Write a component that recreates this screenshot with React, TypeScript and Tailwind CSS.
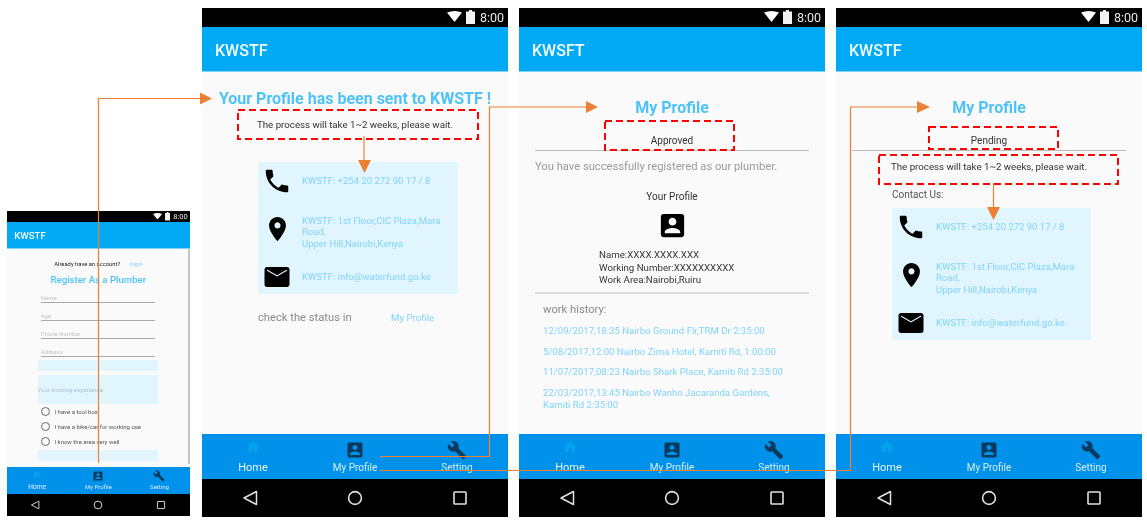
import React from "react";

const P = {
  call: "M6.62 10.79c1.44 2.83 3.76 5.14 6.59 6.59l2.2-2.2c.27-.27.67-.36 1.02-.24 1.12.37 2.33.57 3.57.57.55 0 1 .45 1 1V20c0 .55-.45 1-1 1-9.39 0-17-7.61-17-17 0-.55.45-1 1-1h3.5c.55 0 1 .45 1 1 0 1.25.2 2.45.57 3.57.11.35.03.74-.25 1.02l-2.2 2.2z",
  pin: "M12 2C8.13 2 5 5.13 5 9c0 5.25 7 13 7 13s7-7.75 7-13c0-3.87-3.13-7-7-7zm0 9.5c-1.38 0-2.5-1.12-2.5-2.5s1.12-2.5 2.5-2.5 2.5 1.12 2.5 2.5-1.12 2.5-2.5 2.5z",
  mail: "M20 4H4c-1.1 0-1.99.9-1.99 2L2 18c0 1.1.9 2 2 2h16c1.1 0 2-.9 2-2V6c0-1.1-.9-2-2-2zm0 3l-8 4.5L4 7V6l8 4.5L20 6v1z",
  home: "M10 20v-6h4v6h5v-8h3L12 3 2 12h3v8z",
  box: "M3 5v14c0 1.1.89 2 2 2h14c1.1 0 2-.9 2-2V5c0-1.1-.9-2-2-2H5c-1.11 0-2 .9-2 2zm12 4c0 1.66-1.34 3-3 3s-3-1.34-3-3 1.34-3 3-3 3 1.34 3 3zm-9 8c0-2 4-3.1 6-3.1s6 1.1 6 3.1v1H6v-1z",
  wrench: "M22.7 19l-9.1-9.1c.9-2.3.4-5-1.5-6.9-2-2-5-2.4-7.4-1.3L9 6 6 9 1.6 4.7C.4 7.1.9 10.1 2.9 12.1c1.9 1.9 4.6 2.4 6.9 1.5l9.1 9.1c.4.4 1 .4 1.4 0l2.3-2.3c.5-.4.5-1.1.1-1.4z",
};

function Icon({ d, size, className }: { d: string; size: number; className?: string }) {
  return (
    <svg width={size} height={size} viewBox="0 0 24 24" className={className} fill="currentColor">
      <path d={d} />
    </svg>
  );
}

function StatusBar() {
  return (
    <div className="h-[19px] shrink-0 bg-black flex items-center justify-end pr-[4px] gap-[4px]">
      <svg width="15" height="11" viewBox="0 0 15 11" className="mt-[-2px]">
        <path d="M0 1.5 Q7.5 -1.5 15 1.5 L7.5 11 Z" fill="#fff" />
      </svg>
      <svg width="9" height="14" viewBox="0 0 9 14" className="mr-[1px] mt-[-1px]">
        <path d="M3 0h3v1.5h3V14H0V1.5h3z" fill="#f2f2f2" />
      </svg>
      <span className="text-[12.5px] leading-none text-[#e8e8e8] mt-[1px]">8:00</span>
    </div>
  );
}

function AppBar({ title }: { title: string }) {
  return (
    <div className="h-[45px] shrink-0 bg-[#02a9f4] border-b border-[#7fd4fa] flex items-center pl-[13px] pt-[3px]">
      <span className="text-[16px] font-medium text-[#f4fbff]">{title}</span>
    </div>
  );
}

function BottomNav() {
  return (
    <div className="shrink-0">
      <div className="h-[45px] bg-[#0091ea] grid grid-cols-3">
        <div className="flex flex-col items-center">
          <Icon d={P.home} size={16} className="text-[#03a3ee] mt-[5px] mb-[2px]" />
          <span className="text-[11px] leading-[14px] text-[#e6f4fd] mt-[4px]">Home</span>
        </div>
        <div className="flex flex-col items-center">
          <Icon d={P.box} size={20} className="text-[#0a3a5e] mt-[6px]" />
          <span className="text-[10px] leading-[14px] text-[#d6ecfb] mt-[1px]">My Profile</span>
        </div>
        <div className="flex flex-col items-center">
          <Icon d={P.wrench} size={20} className="text-[#0a3a5e] mt-[6px]" />
          <span className="text-[10px] leading-[14px] text-[#d6ecfb] mt-[1px]">Setting</span>
        </div>
      </div>
      <div className="h-[38px] bg-black flex items-center justify-between px-[38px]">
        <svg width="20" height="20" viewBox="0 0 20 20" fill="none" stroke="#e0e0e0" strokeWidth="1.5">
          <path d="M16.5 3.5 V16.5 L4 10 Z" strokeLinejoin="round" />
        </svg>
        <svg width="20" height="20" viewBox="0 0 20 20" fill="none" stroke="#e0e0e0" strokeWidth="1.6">
          <circle cx="10" cy="10" r="6.4" />
        </svg>
        <svg width="20" height="20" viewBox="0 0 20 20" fill="none" stroke="#e0e0e0" strokeWidth="1.6">
          <rect x="4" y="4" width="12" height="12" rx="0.8" />
        </svg>
      </div>
    </div>
  );
}

function ContactCard() {
  const txt = "text-[9.5px] leading-[11.5px] text-[#81d4fa] ml-[6px]";
  const col = "w-[38px] flex justify-center text-black";
  return (
    <div className="w-[199px] h-[132px] bg-[#e1f5fe]">
      <div className="h-[38px] flex items-center">
        <div className={col}><Icon d={P.call} size={30} /></div>
        <span className={txt}>KWSTF: +254 20 272 90 17 / 8</span>
      </div>
      <div className="h-[36px] mt-[14px] flex items-center">
        <div className={col}><Icon d={P.pin} size={29} className="translate-y-[-3.5px]" /></div>
        <span className={txt}>KWSTF: 1st Floor,CIC Plaza,Mara<br />Road,<br />Upper Hill,Nairobi,Kenya</span>
      </div>
      <div className="h-[26px] mt-[14px] flex items-center">
        <div className={col}><Icon d={P.mail} size={30} /></div>
        <span className={txt}>KWSTF: info@waterfund.go.ke</span>
      </div>
    </div>
  );
}

function Phone({ title, children }: { title: string; children: React.ReactNode }) {
  return (
    <div className="w-[306px] h-[509px] flex flex-col bg-[#fafafa] blur-[0.35px] font-['Roboto',sans-serif]">
      <StatusBar />
      <AppBar title={title} />
      <div className="flex-1 min-h-0 overflow-hidden relative">{children}</div>
      <BottomNav />
    </div>
  );
}

function Sent() {
  return (
    <div className="flex flex-col">
      <div className="mt-[17px] h-[20px] leading-[20px] text-center text-[16px] font-bold text-[#4fc3f7] whitespace-nowrap">
        Your Profile has been sent to KWSTF !
      </div>
      <div className="mt-[9px] h-[14px] leading-[14px] text-center text-[9.7px] text-[#333]">
        The process will take 1~2 weeks, please wait.
      </div>
      <div className="mt-[30px] ml-[56px]"><ContactCard /></div>
      <div className="mt-[16px] ml-[56px] flex items-center h-[16px]">
        <span className="text-[11.2px] text-[#8a8a8a] w-[133px]">check the status in</span>
        <span className="text-[9.7px] text-[#81d4fa]">My Profile</span>
      </div>
    </div>
  );
}

function Head({ status }: { status: string }) {
  return (
    <>
      <div className="mt-[26px] h-[20px] leading-[20px] text-center text-[16px] font-bold text-[#4fc3f7]">My Profile</div>
      <div className="mt-[16px] h-[14px] leading-[14px] text-center text-[10px] text-[#333]">{status}</div>
      <div className="mt-[2px] mx-[16px] h-px bg-[#bdbdbd]" />
    </>
  );
}

function Approved() {
  const hist = "text-[9.6px] leading-[12px] text-[#81d4fa]";
  return (
    <div className="flex flex-col">
      <Head status="Approved" />
      <div className="mt-[8px] ml-[16px] h-[16px] leading-[16px] text-[11.2px] text-[#9a9a9a]">You have successfully registered as our plumber.</div>
      <div className="mt-[15px] h-[14px] leading-[14px] text-center text-[10px] text-[#333]">Your Profile</div>
      <div className="mt-[6px] flex justify-center"><Icon d={P.box} size={31} className="text-black" /></div>
      <div className="mt-[8px] ml-[80px] text-[9.7px] leading-[12.5px] text-[#333]">
        <div>Name:XXXX.XXXX.XXX</div>
        <div>Working Number:XXXXXXXXXX</div>
        <div>Work Area:Nairobi,Ruiru</div>
      </div>
      <div className="mt-[5px] mx-[16px] h-[2px] bg-[#dcdcdc]" />
      <div className="mt-[8px] ml-[24px] h-[16px] leading-[16px] text-[11.2px] text-[#8a8a8a]">work history:</div>
      <div className={"mt-[7px] ml-[24px] " + hist}>12/09/2017,18:35 Nairbo Ground Flr,TRM Dr 2:35:00</div>
      <div className={"mt-[9px] ml-[24px] " + hist}>5/08/2017,12:00 Nairbo Zima Hotel, Kamiti Rd, 1:00:00</div>
      <div className={"mt-[8.5px] ml-[24px] " + hist}>11/07/2017,08:23 Nairbo Shark Place, Kamiti Rd 2:35:00</div>
      <div className={"mt-[8.5px] ml-[24px] " + hist}>22/03/2017,13:45 Nairbo Wanho Jacaranda Gardens,<br />Kamiti Rd 2:35:00</div>
    </div>
  );
}

function Pending() {
  return (
    <div className="flex flex-col">
      <Head status="Pending" />
      <div className="mt-[9px] ml-[55px] h-[14px] leading-[14px] text-[9.7px] text-[#333] whitespace-nowrap">The process will take 1~2 weeks, please wait.</div>
      <div className="mt-[14px] ml-[56px] h-[14px] leading-[14px] text-[10px] text-[#555]">Contact Us:</div>
      <div className="mt-[6px] ml-[56px]"><ContactCard /></div>
    </div>
  );
}

function Line({ label }: { label: string }) {
  return (
    <div className="ml-[57px] w-[191px] h-[30px] flex items-end border-b-2 border-[#a8a8a8]">
      <span className="text-[10px] leading-[14px] text-[#c4c4c4]">{label}</span>
    </div>
  );
}

function Radio({ label }: { label: string }) {
  return (
    <div className="h-[25px] flex items-center ml-[57px]">
      <div className="w-[16px] h-[16px] rounded-full border-2 border-[#666]" />
      <span className="ml-[7px] text-[10px] text-[#555]">{label}</span>
    </div>
  );
}

function Register() {
  return (
    <div className="flex flex-col">
      <div className="mt-[17px] h-[14px] leading-[14px] flex justify-center text-[9.7px]">
        <span className="text-[#222]">Already have an account?</span>
        <span className="ml-[16px] text-[#81d4fa]">login</span>
      </div>
      <div className="mt-[10px] h-[20px] leading-[20px] text-center text-[16px] font-medium text-[#4fc3f7]">Register As a Plumber</div>
      <div className="mt-[-1px] flex flex-col">
        <Line label="Name" /><Line label="Age" /><Line label="Phone Number" /><Line label="Address" />
      </div>
      <div className="mt-[5px] ml-[52px] w-[201px] h-[17px] bg-[#e1f5fe]" />
      <div className="mt-[7px] ml-[52px] w-[201px] h-[48px] bg-[#e1f5fe] flex items-center">
        <span className="text-[10px] text-[#a9c4d2]">Your working experience</span>
      </div>
      <div className="mt-[1px]">
        <Radio label="I have a tool box" />
        <Radio label="I have a bike/car for working use" />
        <Radio label="I know the area very well" />
      </div>
      <div className="mt-[2px] ml-[52px] w-[201px] h-[17px] bg-[#e1f5fe]" />
      <div className="mt-[5px] ml-[52px] text-[10px] text-[#81d4fa]">Upload a picture</div>
      <div className="absolute top-0 right-[1px] w-[3px] h-[358px] bg-[#c4c4c4]" />
    </div>
  );
}

function Annotations() {
  const o = "#ed8033";
  const r = "#fe0000";
  const boxes = [
    [238, 110, 240, 29],
    [605, 121, 129, 29],
    [929, 127, 129, 22],
    [879, 155, 239, 29],
  ];
  return (
    <svg className="absolute inset-0" width="1147" height="524" fill="none">
      {boxes.map(([x, y, w, h], i) => (
        <rect key={i} x={x} y={y} width={w} height={h} stroke={r} strokeWidth="2" strokeDasharray="7 4" />
      ))}
      <path d="M98.5 463V98.5H201" stroke={o} strokeWidth="1.2" />
      <path d="M200 92.5L212 98.5L200 104.5Z" fill={o} />
      <path d="M380 456.5H489.5V107H587" stroke={o} strokeWidth="1.2" />
      <path d="M586 101L598 107L586 113Z" fill={o} />
      <path d="M380 470.5H850.5V107H918" stroke={o} strokeWidth="1.2" />
      <path d="M917 101L930 107L917 113Z" fill={o} />
      <path d="M364 136V161" stroke={o} strokeWidth="1.2" />
      <path d="M358 160H371L364.5 173Z" fill={o} />
      <path d="M993.5 183V208" stroke={o} strokeWidth="1.2" />
      <path d="M987 207H1000L993.5 220Z" fill={o} />
    </svg>
  );
}

export default function App() {
  return (
    <div className="relative w-[1147px] h-[524px] overflow-hidden bg-white">
      <div className="absolute left-[6.5px] top-[211px]">
        <div className="[zoom:0.6]">
          <Phone title="KWSTF"><Register /></Phone>
        </div>
      </div>
      <div className="absolute left-[202px] top-[8px]"><Phone title="KWSTF"><Sent /></Phone></div>
      <div className="absolute left-[519px] top-[8px]"><Phone title="KWSFT"><Approved /></Phone></div>
      <div className="absolute left-[836px] top-[8px]"><Phone title="KWSTF"><Pending /></Phone></div>
      <Annotations />
    </div>
  );
}
